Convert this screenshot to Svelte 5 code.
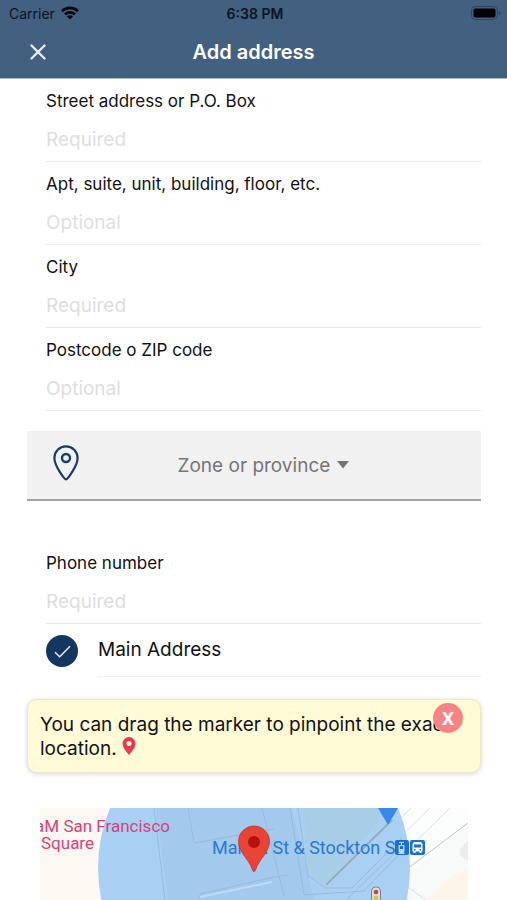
<script lang="ts">
	let fields = [
		{ id: 'street', label: 'Street address or P.O. Box', hint: 'Required' },
		{ id: 'unit', label: 'Apt, suite, unit, building, floor, etc.', hint: 'Optional' },
		{ id: 'city', label: 'City', hint: 'Required' },
		{ id: 'zip', label: 'Postcode o ZIP code', hint: 'Optional' }
	];

	let values: Record<string, string> = $state({ street: '', unit: '', city: '', zip: '', phone: '' });
	let zone = $state('');
	let mainAddress = $state(true);
	let showTip = $state(true);
</script>

{#snippet field(id: string, label: string, hint: string)}
	<div class="field">
		<label for={id}>{label}</label>
		<input {id} type="text" placeholder={hint} bind:value={values[id]} />
	</div>
{/snippet}

<div class="screen">
	<header>
		<div class="status">
			<div class="carrier">
				<span>Carrier</span>
				<svg width="18" height="14" viewBox="0 0 18 14">
					<g fill="none" stroke="#05080c" stroke-width="2.6">
						<path d="M1 5.2a11.4 11.4 0 0 1 16 0" />
						<path d="M4 8.4a7.2 7.2 0 0 1 10 0" />
					</g>
					<path d="M9 13.6L5.9 10.5a4.4 4.4 0 0 1 6.2 0z" fill="#05080c" />
				</svg>
			</div>
			<span class="time">6:38 PM</span>
			<svg class="battery" width="30" height="14" viewBox="0 0 30 14">
				<rect x="0.5" y="0.5" width="26" height="13" rx="4" fill="none" stroke="#2c4560" />
				<rect x="2.500" y="2.500" width="22" height="9" rx="2" fill="#000" />
				<path d="M28 5v4q1.6-.6 1.6-2T28 5z" fill="#2c4560" />
			</svg>
		</div>
		<div class="titlebar">
			<button class="close" aria-label="Close">
				<svg width="16" height="16" viewBox="0 0 16 16">
					<path d="M1.5 1.5l13 13M14.5 1.5l-13 13" stroke="#e6effc" stroke-width="2.4" stroke-linecap="round" />
				</svg>
			</button>
			<h1>Add address</h1>
		</div>
	</header>

	<main>
		{#each fields as f (f.id)}
			{@render field(f.id, f.label, f.hint)}
		{/each}

		<div class="zone">
			<svg class="pin" width="26" height="36" viewBox="0 0 26 36" fill="none" stroke="#163d68">
				<path d="M13 34.300C11.500 34.300 1.400 21 1.400 13a11.600 11.600 0 0 1 23.200 0C24.600 21 14.500 34.300 13 34.300z" stroke-width="2.200" />
				<circle cx="13" cy="13" r="4" stroke-width="2.400" />
			</svg>
			<div class="picker">
				<select bind:value={zone} aria-label="Zone or province">
					<option value="">Zone or province</option>
				</select>
				<svg width="12" height="8" viewBox="0 0 12 8"><path d="M0 0h12L6 7.500z" fill="#757575" /></svg>
			</div>
		</div>

		{@render field('phone', 'Phone number', 'Required')}

		<div class="main-address">
			<div class="tick">
				<input id="main" type="checkbox" bind:checked={mainAddress} />
				<svg width="32" height="32" viewBox="0 0 32 32">
					<path d="M9 17.200l4.700 4.600L24 11.300" fill="none" stroke="#e4eefa" stroke-width="1.500" />
				</svg>
			</div>
			<label for="main">Main Address</label>
		</div>

		{#if showTip}
			<div class="tip">
				You can drag the marker to pinpoint the exact location.
				<svg width="14" height="18" viewBox="0 0 14 18">
					<path d="M7 0a6.500 6.500 0 0 0-6.500 6.500C.5 11 7 18 7 18s6.500-7 6.500-11.500A6.500 6.500 0 0 0 7 0zm0 4a2.500 2.500 0 1 1 0 5 2.500 2.500 0 0 1 0-5z" fill="#e83a52" />
				</svg>
				<button aria-label="Dismiss" onclick={() => (showTip = false)}>X</button>
			</div>
		{/if}

		<div class="map">
			<svg viewBox="0 0 428 92" preserveAspectRatio="xMidYMin slice">
				<rect width="428" height="92" fill="#fef8f2" />
				<!-- streets on the right side -->
				<path d="M330 0h98v92H240z" fill="#fcfdfd" />
				<path d="M428 17L336 92h92z" fill="#f8f9f9" />
				<path d="M428 60l-26 14-6 10-16 8h48z" fill="#fdf5ea" />
				<path d="M420 40l8-7v20l-8-6z" fill="#ebecec" />
				<g fill="none" stroke="#dcdfe1">
					<path d="M410 0L316 92M390 0l-80 78M371 0l-62 62M352 0l-42 38" />
					<path d="M428 15L326 92" stroke="#bfc3c6" />
					<path d="M366 78l20 14M360 88l6-10" />
				</g>

				<!-- accuracy radius -->
				<circle cx="214" cy="60" r="156" fill="#a9d0f3" />
				<path d="M153 0h-37l12 92h146L252 0z" fill="#a3caed" />
				<path d="M264 0h84l-62 77-18-9z" fill="#a8cde6" />
				<g fill="none" stroke="#96bbdc">
					<path d="M148 0l6 35 80-14M114 0l11 92M160 92v-6l74-17 14-2M222 0l22 88" />
					<path d="M250 0l14 87 60-4 44-46M258 0l10 68 18 12h26l50-50" />
					<path d="M160 89l72-15" stroke="#bddcf8" stroke-width="2" />
					<path d="M286 77l66-65" stroke="#95afb9" stroke-width="2" />
					<path d="M306 92l56-54" />
				</g>
				<path d="M338 0h20l-10 17z" fill="#3a87ec" />

				<g class="pink">
					<text x="130" y="24" text-anchor="end">aM San Francisco</text>
					<text x="1" y="41">Square</text>
				</g>
				<text class="station" x="172" y="46">Market St &amp; Stockton St</text>

				<!-- transit badges -->
				<rect x="355" y="32" width="14" height="15" rx="2" fill="#1a6fd6" />
				<rect x="370" y="32" width="15" height="15" rx="2" fill="#1a6fd6" />
				<g fill="#b9dafa">
					<path d="M359 34h5v1h-2v2h2.500v7h-6v-7h2.500v-2h-2z" />
					<path d="M358 46l1.500-2h4l1.500 2z" />
				</g>
				<path d="M360 38h3v3h-3z" fill="#1a6fd6" />
				<path d="M374 34h7l1.500 2v7.500h-1V45h-2v-1.500h-4V45h-2v-1.500h-1V36z" fill="#fff" />
				<path d="M374 36.500h7v3h-7zM374 41h1.500v1.500h-1.500zM379.500 41h1.500v1.500h-1.500z" fill="#1a6fd6" />

				<!-- traffic light -->
				<rect x="331.500" y="79" width="9" height="18" rx="4" fill="#d7dfdd" stroke="#6f8797" />
				<circle cx="336" cy="84" r="2.300" fill="#c94040" />
				<circle cx="336" cy="90" r="2.300" fill="#dcc230" />

				<!-- marker -->
				<path d="M214 18c-8.600 0-15.500 6.900-15.500 15.500 0 4.500 1.800 8.200 4.200 12 3.600 5.500 7.500 9.500 10 17 .6 1.400 2 1.400 2.600 0 2.500-7.500 6.400-11.500 10-17 2.400-3.800 4.200-7.500 4.200-12C229.500 24.900 222.600 18 214 18z" fill="#ea4335" stroke="#b8362f" stroke-width="0.800" />
				<circle cx="214" cy="34" r="6" fill="#b31412" />
			</svg>
		</div>
	</main>
</div>

<style>
	:global(body) {
		margin: 0;
		background: #fff;
	}

	.screen {
		display: flex;
		flex-direction: column;
		height: 100vh;
		overflow: hidden;
		font-family: Inter, 'Liberation Sans', sans-serif;
		color: #111;
	}

	header {
		background: #426080;
		border-bottom: 1px solid #a9b9cc;
	}

	.status {
		display: grid;
		grid-template-columns: 1fr auto 1fr;
		align-items: center;
		height: 26px;
		padding: 0 6px 0 9px;
		font-size: 14px;
		color: #0c141d;
	}

	.carrier {
		display: flex;
		align-items: center;
		gap: 6px;
	}

	.time {
		font-weight: 600;
	}

	.battery {
		justify-self: end;
	}

	.titlebar {
		display: grid;
		grid-template-columns: 76px 1fr 76px;
		align-items: center;
		height: 52px;
	}

	.close {
		display: flex;
		justify-content: center;
		border: 0;
		padding: 0;
		background: none;
		cursor: pointer;
	}

	h1 {
		margin: 0;
		font-size: 20px;
		font-weight: 600;
		text-align: center;
		color: #fff;
	}

	main {
		flex: 1;
		display: flex;
		flex-direction: column;
		padding: 0 26px 0 27px;
	}

	.field {
		display: flex;
		flex-direction: column;
		gap: 4px;
		margin-left: 19px;
		padding-top: 10px;
		border-bottom: 1px solid #e9e9e9;
	}

	.field label {
		font-size: 17px;
		line-height: 24px;
	}

	.field input {
		height: 44px;
		box-sizing: border-box;
		border: 0;
		padding: 0;
		outline: none;
		background: none;
		font: inherit;
		font-size: 19px;
	}

	.field input::placeholder {
		color: #dedede;
		opacity: 1;
	}

	.zone {
		display: grid;
		grid-template-columns: 78px 1fr 60px;
		align-items: center;
		justify-items: center;
		height: 68px;
		margin: 20px 0 40px;
		background: #f1f1f1;
		border-bottom: 2px solid #a3a3a3;
	}

	.pin {
		margin-bottom: 4px;
	}

	.picker {
		display: flex;
		align-items: center;
		gap: 6px;
	}

	select {
		appearance: none;
		border: 0;
		padding: 0;
		background: none;
		font: inherit;
		font-size: 19px;
		color: #757575;
	}

	.main-address {
		display: flex;
		align-items: center;
		gap: 20px;
		margin-left: 19px;
	}

	.tick {
		display: grid;
	}

	.tick > * {
		grid-area: 1 / 1;
	}

	.tick svg {
		pointer-events: none;
	}

	.tick input {
		appearance: none;
		width: 32px;
		height: 32px;
		margin: 0;
		border-radius: 50%;
		background: #ccd3db;
	}

	.tick input:checked {
		background: #14375f;
	}

	.main-address label {
		flex: 1;
		font-size: 19px;
		line-height: 52px;
		border-bottom: 1px solid #efefef;
	}

	.tip {
		position: relative;
		margin-top: 22px;
		padding: 13px 12px 11px;
		border: 1px solid #ece8c8;
		border-radius: 10px;
		background: #fffbd6;
		box-shadow: 0 1px 5px rgba(0, 0, 0, 0.16);
		font-size: 19px;
		line-height: 24px;
	}

	.tip button {
		position: absolute;
		top: 3px;
		right: 17px;
		width: 30px;
		height: 30px;
		border: 0;
		border-radius: 50%;
		padding: 0;
		background: #fc8286;
		color: #fff;
		font-family: Roboto, sans-serif;
		font-size: 19px;
		font-weight: 700;
		cursor: pointer;
	}

	.map {
		flex: 1;
		min-height: 92px;
		margin: 35px 13px 0;
		overflow: hidden;
	}

	.map svg {
		display: block;
		width: 100%;
		height: 100%;
	}

	.map text {
		font-family: Roboto, sans-serif;
		font-size: 17px;
	}

	.pink {
		fill: #d8417c;
	}

	.map .station {
		fill: #2a78d0;
		font-size: 18px;
	}
</style>
